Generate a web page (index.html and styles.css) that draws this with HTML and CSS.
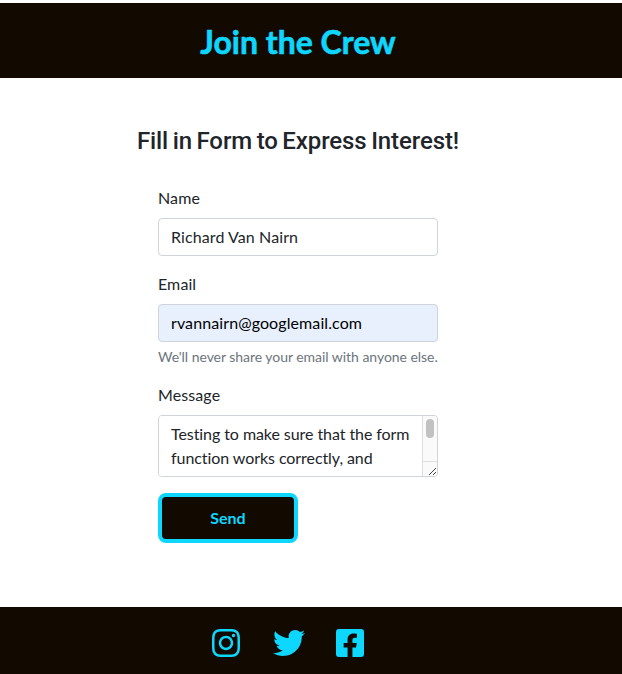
FILE: index.html
```html
<!DOCTYPE html>
<html lang="en">
<head>
<meta charset="utf-8">
<title>Join the Crew</title>
<link rel="stylesheet" href="styles.css">
</head>
<body>
<header class="banner"><h1>Join the Crew</h1></header>
<main class="content">
  <h2>Fill in Form to Express Interest!</h2>
  <form class="form">
    <div class="group">
      <label for="name">Name</label>
      <input id="name" class="control" type="text" value="Richard Van Nairn">
    </div>
    <div class="group">
      <label for="email">Email</label>
      <input id="email" class="control filled" type="email" value="rvannairn@googlemail.com">
      <small>We'll never share your email with anyone else.</small>
    </div>
    <div class="group">
      <label for="message">Message</label>
      <div class="message">
        <textarea id="message" rows="2">Testing to make sure that the form function works correctly, and</textarea>
        <div class="track">
          <div class="thumb"></div>
          <svg class="grip" viewBox="0 0 14 14"><path d="M6 13 13 6M10 13 13 10" fill="none" stroke="#444" stroke-width="1"/></svg>
        </div>
      </div>
    </div>
    <button class="send" type="button">Send</button>
  </form>
</main>
<footer class="footer">
  <svg class="icon" viewBox="0 0 448 512"><path d="M224.1 141c-63.6 0-114.9 51.3-114.9 114.9s51.3 114.9 114.9 114.9S339 319.5 339 255.9 287.7 141 224.1 141zm0 189.6c-41.1 0-74.7-33.5-74.7-74.7s33.5-74.7 74.7-74.7 74.7 33.5 74.7 74.7-33.6 74.7-74.7 74.7zm146.4-194.3c0 14.9-12 26.8-26.8 26.8-14.9 0-26.8-12-26.8-26.8s12-26.8 26.8-26.8 26.8 12 26.8 26.8zm76.1 27.2c-1.7-35.9-9.9-67.7-36.2-93.9-26.2-26.2-58-34.4-93.9-36.2-37-2.1-147.9-2.1-184.9 0-35.8 1.7-67.6 9.9-93.9 36.1s-34.4 58-36.2 93.9c-2.1 37-2.1 147.9 0 184.9 1.7 35.9 9.9 67.7 36.2 93.9s58 34.4 93.9 36.2c37 2.1 147.9 2.1 184.9 0 35.9-1.7 67.7-9.9 93.9-36.2 26.2-26.2 34.4-58 36.2-93.9 2.1-37 2.1-147.8 0-184.8zM398.8 388c-7.8 19.6-22.9 34.7-42.6 42.6-29.5 11.7-99.5 9-132.1 9s-102.7 2.6-132.1-9c-19.6-7.8-34.7-22.9-42.6-42.6-11.7-29.5-9-99.5-9-132.1s-2.6-102.7 9-132.1c7.8-19.6 22.9-34.7 42.6-42.6 29.5-11.7 99.5-9 132.1-9s102.7-2.6 132.1 9c19.6 7.8 34.7 22.9 42.6 42.6 11.7 29.5 9 99.5 9 132.1s2.7 102.7-9 132.1z"/></svg>
  <svg class="icon wide" viewBox="0 0 512 512"><path d="M459.37 151.716c.325 4.548.325 9.097.325 13.645 0 138.72-105.583 298.558-298.558 298.558-59.452 0-114.68-17.219-161.137-47.106 8.447.974 16.568 1.299 25.34 1.299 49.055 0 94.213-16.568 130.274-44.832-46.132-.975-84.792-31.188-98.112-72.772 6.498.974 12.995 1.624 19.818 1.624 9.421 0 18.843-1.3 27.614-3.573-48.081-9.747-84.143-51.98-84.143-102.985v-1.299c13.969 7.797 30.214 12.67 47.431 13.319-28.264-18.843-46.781-51.005-46.781-87.391 0-19.492 5.197-37.36 14.294-52.954 51.655 63.675 129.3 105.258 216.365 109.807-1.624-7.797-2.599-15.918-2.599-24.04 0-57.828 46.782-104.934 104.934-104.934 30.213 0 57.502 12.67 76.67 33.137 23.715-4.548 46.456-13.32 66.599-25.34-7.798 24.366-24.366 44.833-46.132 57.827 21.117-2.273 41.584-8.122 60.426-16.243-14.292 20.791-32.161 39.308-52.628 54.253z"/></svg>
  <svg class="icon" viewBox="0 0 448 512"><path d="M400 32H48A48 48 0 0 0 0 80v352a48 48 0 0 0 48 48h137.25V327.69h-63V256h63v-54.64c0-62.15 37-96.48 93.67-96.48 27.14 0 55.52 4.84 55.52 4.84v61h-31.27c-30.81 0-40.42 19.12-40.42 38.73V256h68.78l-11 71.69h-57.78V480H400a48 48 0 0 0 48-48V80a48 48 0 0 0-48-48z"/></svg>
</footer>
</body>
</html>
```
FILE: styles.css
```css
* { box-sizing: border-box; }
body {
  margin: 0;
  padding-top: 3px;
  height: 674px;
  display: flex;
  flex-direction: column;
  overflow: hidden;
  background: #fff;
  color: #212529;
  font: 400 16px/24px Lato, sans-serif;
}
.banner {
  height: 75px;
  padding: 20px 26px 0 0;
  background: #120a00;
  text-align: center;
}
h1 { margin: 0; color: #0dd6ff; font-size: 32px; line-height: 38px; font-weight: 700; -webkit-text-stroke: 0.6px #0dd6ff; }
.content { height: 529px; padding: 49px 26px 0 0; }
h2 {
  margin: 0 0 30px;
  text-align: center;
  font: 500 24px/29px Roboto, sans-serif;
  letter-spacing: -0.1px;
  word-spacing: -1.3px;
}
.form { width: 280px; margin-left: 158px; }
.group { margin-bottom: 16px; }
label { display: block; margin-bottom: 8px; letter-spacing: 0.1px; }
.control {
  display: block;
  width: 100%;
  height: 38px;
  padding: 5px 12px 7px;
  border: 1px solid #ced4da;
  border-radius: 4px;
  background: #fff;
  color: #212529;
  font: inherit;
  letter-spacing: 0.1px;
}
.filled { background: #e8f0fe; color: #000; }
small { display: block; margin-top: 4px; font-size: 14px; line-height: 21px; letter-spacing: -0.04px; color: #6c757d; white-space: nowrap; }
.message {
  display: flex;
  height: 62px;
  border: 1px solid #ced4da;
  border-radius: 4px;
  overflow: hidden;
}
textarea {
  flex: 1;
  min-width: 0;
  padding: 6px 0 6px 12px;
  border: 0;
  background: #fff;
  color: #212529;
  font: inherit;
  letter-spacing: -0.07px;
  resize: none;
  overflow: hidden;
}
.track {
  display: flex;
  flex-direction: column;
  justify-content: space-between;
  width: 15px;
  background: #fafafa;
  border-left: 1px solid #dedede;
}
.thumb { width: 8px; height: 19px; margin: 3px 0 0 3px; border-radius: 4px; background: #c1c1c1; }
.grip { width: 14px; height: 15px; border-top: 1px solid #dedede; }
.send {
  display: block;
  width: 140px;
  height: 50px;
  border: 4px solid #0dd6ff;
  border-radius: 8px;
  background: #120a00;
  color: #0dd6ff;
  font: 700 16px/24px Lato, sans-serif;
}
.footer {
  display: flex;
  flex: 1;
  align-items: flex-start;
  padding: 20px 0 0 212px;
  background: #120a00;
}
.icon { width: 28px; height: 32px; fill: #0dd6ff; }
.wide { width: 32px; margin: 0 31px 0 33px; }
```
